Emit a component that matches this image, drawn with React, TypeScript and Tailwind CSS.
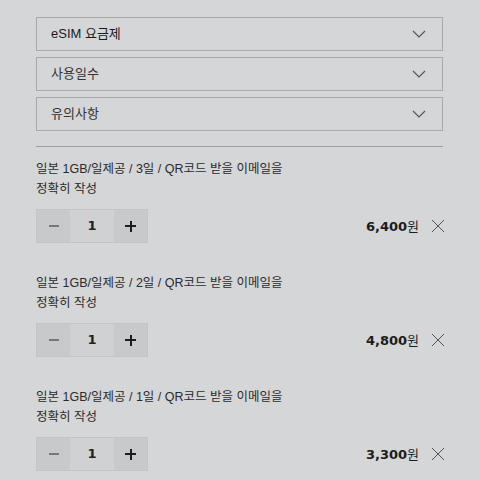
const items = [
  { days: 3, price: "6,400" },
  { days: 2, price: "4,800" },
  { days: 1, price: "3,300" },
];

const menus = ["eSIM 요금제", "사용일수", "유의사항"];

function Chevron() {
  return (
    <svg width="14" height="8" viewBox="0 0 14 8" fill="none" className="text-[#555]">
      <path d="M1 1l6 6 6-6" stroke="currentColor" strokeWidth="1.2" />
    </svg>
  );
}

function Close() {
  return (
    <svg width="14" height="14" viewBox="0 0 14 14" fill="none" className="text-[#555]">
      <path d="M1 1l12 12M13 1L1 13" stroke="currentColor" strokeWidth="1" />
    </svg>
  );
}

export default function App() {
  return (
    <div
      className="min-h-[480px] w-[480px] overflow-hidden bg-[#d5d6d7] pt-[17px] text-[#2b2b2b]"
      style={{ fontFamily: '"Liberation Sans", "Noto Sans CJK KR", sans-serif' }}
    >
      <div className="ml-[36px] w-[407px]">
        <div className="flex flex-col gap-[6px]">
          {menus.map((m, i) => (
            <div
              key={m}
              className="flex h-[34px] items-center justify-between border border-[#a8a9aa] pl-[14px] pr-[16px]"
            >
              <span className={`text-[13px] ${i === 0 ? "text-[#1a1a1a]" : "text-[#333]"}`}>{m}</span>
              <Chevron />
            </div>
          ))}
        </div>

        <div className="mt-[15px] border-t border-[#9c9d9e]" />

        <div className="flex flex-col gap-[30px] pt-[12px]">
          {items.map((it) => (
            <div key={it.days}>
              <p className="max-w-[266px] break-keep text-[12.5px] leading-[20px] text-[#2b2b2b]">
                일본 1GB/일제공 / {it.days}일 / QR코드 받을 이메일을 정확히 작성
              </p>
              <div className="mt-[10px] flex items-center justify-between">
                <div className="flex h-[34px] border border-[#c3c4c5]">
                  <button className="flex w-[33px] items-center justify-center bg-[#c8c9ca]">
                    <span className="block h-[2px] w-[10px] bg-[#777]" />
                  </button>
                  <div
                    className="flex w-[44px] items-center justify-center bg-[#d0d1d2] text-[13px] font-bold text-[#222]"
                    style={{ fontFamily: '"DejaVu Sans", sans-serif' }}
                  >
                    1
                  </div>
                  <button className="relative flex w-[33px] items-center justify-center bg-[#c8c9ca]">
                    <span className="absolute h-[2px] w-[11px] bg-[#1c1c1c]" />
                    <span className="absolute h-[11px] w-[2px] bg-[#1c1c1c]" />
                  </button>
                </div>
                <div className="mr-[-2px] flex items-center gap-[12px]">
                  <span className="text-[13px] font-bold text-[#1c1c1c]">
                    <span style={{ fontFamily: '"DejaVu Sans", sans-serif' }}>{it.price}</span>
                    <span className="font-normal" style={{ fontFamily: '"Noto Sans CJK KR", sans-serif' }}>원</span>
                  </span>
                  <Close />
                </div>
              </div>
            </div>
          ))}
        </div>
      </div>
    </div>
  );
}
